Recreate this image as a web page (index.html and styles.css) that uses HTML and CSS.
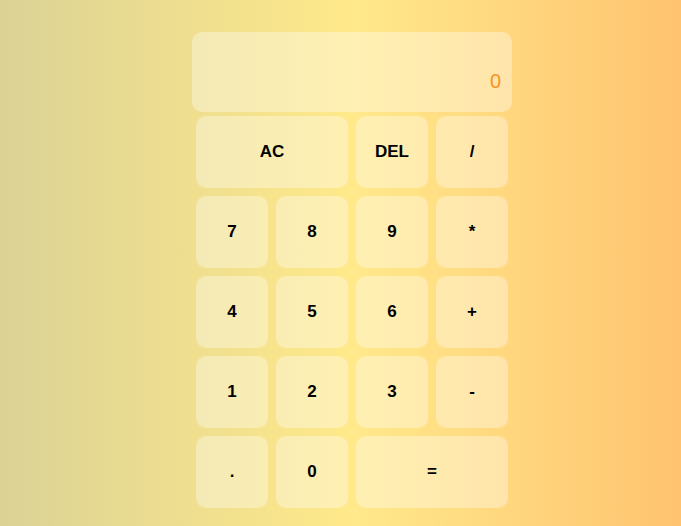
FILE: index.html
```html
<!DOCTYPE html>
<html lang="en">
<head>
<meta charset="utf-8">
<title>Calculator</title>
<link rel="stylesheet" href="styles.css">
</head>
<body>
<div class="calculator">
  <div class="display"><span class="output">0</span></div>
  <div class="keys">
    <button class="key span-two">AC</button>
    <button class="key">DEL</button>
    <button class="key">/</button>
    <button class="key">7</button>
    <button class="key">8</button>
    <button class="key">9</button>
    <button class="key">*</button>
    <button class="key">4</button>
    <button class="key">5</button>
    <button class="key">6</button>
    <button class="key">+</button>
    <button class="key">1</button>
    <button class="key">2</button>
    <button class="key">3</button>
    <button class="key">-</button>
    <button class="key">.</button>
    <button class="key">0</button>
    <button class="key span-two">=</button>
  </div>
</div>
</body>
</html>
```
FILE: styles.css
```css
html, body {
  margin: 0;
  height: 100%;
}
body {
  background: linear-gradient(to right, #dbd295 0%, #ffe98a 52%, #ffc370 100%);
  font-family: "Liberation Sans", Arial, sans-serif;
  padding: 32px 0 0 192px;
  box-sizing: border-box;
}
.calculator {
  width: 320px;
}
.display {
  height: 80px;
  box-sizing: border-box;
  border-radius: 10px;
  background: rgba(255, 255, 255, 0.35);
  display: flex;
  align-items: flex-end;
  justify-content: flex-end;
  padding: 0 11px 21px 0;
}
.output {
  color: #f7931e;
  font-size: 20px;
  line-height: 20px;
}
.keys {
  display: grid;
  grid-template-columns: repeat(4, 72px);
  grid-auto-rows: 72px;
  gap: 8px;
  padding: 4px;
}
.key {
  border: none;
  border-radius: 10px;
  background: rgba(255, 255, 255, 0.35);
  font-family: "Liberation Sans", Arial, sans-serif;
  font-size: 17px;
  font-weight: bold;
  color: #000;
  padding: 0;
  cursor: pointer;
}
.span-two {
  grid-column: span 2;
}
```
